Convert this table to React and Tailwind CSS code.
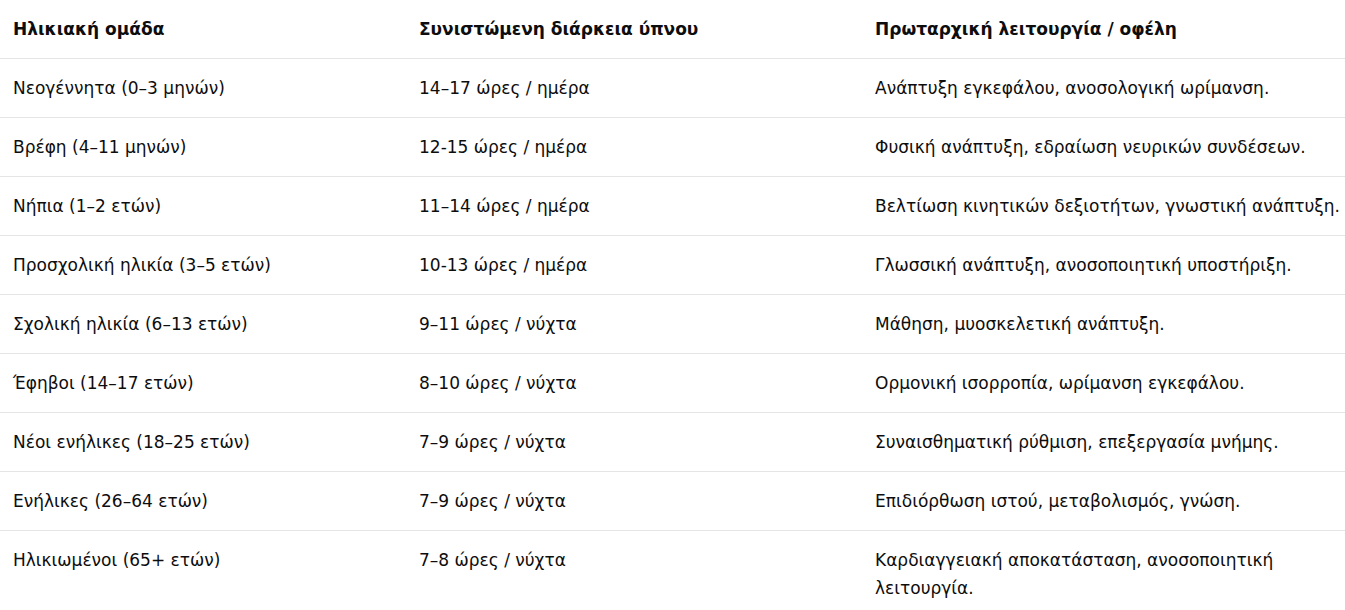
export default function App() {
  const rows = [
    ["Νεογέννητα (0–3 μηνών)", "14–17 ώρες / ημέρα", "Ανάπτυξη εγκεφάλου, ανοσολογική ωρίμανση."],
    ["Βρέφη (4–11 μηνών)", "12-15 ώρες / ημέρα", "Φυσική ανάπτυξη, εδραίωση νευρικών συνδέσεων."],
    ["Νήπια (1–2 ετών)", "11–14 ώρες / ημέρα", "Βελτίωση κινητικών δεξιοτήτων, γνωστική ανάπτυξη."],
    ["Προσχολική ηλικία (3–5 ετών)", "10-13 ώρες / ημέρα", "Γλωσσική ανάπτυξη, ανοσοποιητική υποστήριξη."],
    ["Σχολική ηλικία (6–13 ετών)", "9–11 ώρες / νύχτα", "Μάθηση, μυοσκελετική ανάπτυξη."],
    ["Έφηβοι (14–17 ετών)", "8–10 ώρες / νύχτα", "Ορμονική ισορροπία, ωρίμανση εγκεφάλου."],
    ["Νέοι ενήλικες (18–25 ετών)", "7–9 ώρες / νύχτα", "Συναισθηματική ρύθμιση, επεξεργασία μνήμης."],
    ["Ενήλικες (26–64 ετών)", "7–9 ώρες / νύχτα", "Επιδιόρθωση ιστού, μεταβολισμός, γνώση."],
    ["Ηλικιωμένοι (65+ ετών)", "7–8 ώρες / νύχτα", "Καρδιαγγειακή αποκατάσταση, ανοσοποιητική λειτουργία."],
  ];
  return (
    <div className="w-[1345px] overflow-hidden bg-white text-[#0d0d0d]" style={{ fontFamily: '"DejaVu Sans", sans-serif' }}>
      <table className="w-[1380px] table-fixed border-collapse text-[17px] leading-[28px]">
        <colgroup>
          <col className="w-[406px]" />
          <col className="w-[456px]" />
          <col className="w-[518px]" />
        </colgroup>
        <thead>
          <tr className="border-b border-[#e5e5e5]">
            <th className="px-[13px] py-[15px] text-left font-bold">Ηλικιακή ομάδα</th>
            <th className="px-[13px] py-[15px] text-left font-bold">Συνιστώμενη διάρκεια ύπνου</th>
            <th className="pl-[13px] pr-[30px] py-[15px] text-left font-bold">Πρωταρχική λειτουργία / οφέλη</th>
          </tr>
        </thead>
        <tbody>
          {rows.map((r, i) => (
            <tr key={i} className={i < rows.length - 1 ? "border-b border-[#e5e5e5]" : ""}>
              <td className="px-[13px] py-[15px] align-top">{r[0]}</td>
              <td className="px-[13px] py-[15px] align-top">{r[1]}</td>
              <td className="pl-[13px] pr-[30px] py-[15px] align-top">{r[2]}</td>
            </tr>
          ))}
        </tbody>
      </table>
    </div>
  );
}
